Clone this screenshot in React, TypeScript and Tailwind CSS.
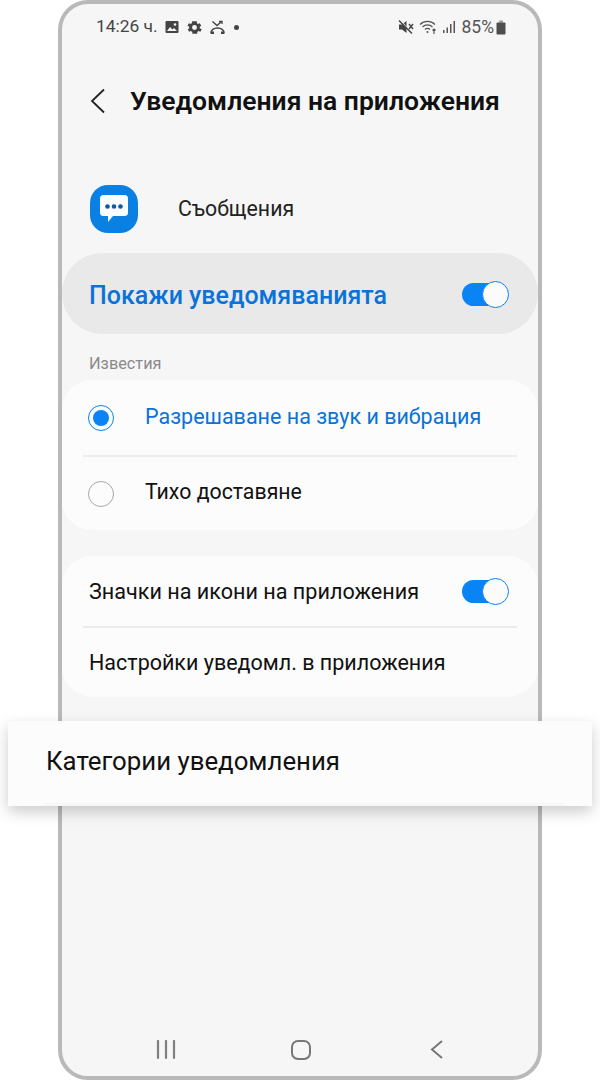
const font = { fontFamily: "Roboto, 'Noto Sans', sans-serif" };

function Toggle() {
  return (
    <div className="relative h-[26px] w-[47px] shrink-0">
      <div className="absolute left-0 top-[2px] h-[23px] w-[40px] rounded-full bg-[#0a84f5]" />
      <div className="absolute right-0 top-0 h-[27px] w-[27px] rounded-full border border-[#0a84f5] bg-[#fbfbfb]" />
    </div>
  );
}

function StatusIcons() {
  return (
    <div className="flex items-center text-[#444]">
      <svg width="14" height="14" viewBox="0 0 14 14">
        <rect x="0.500" y="1" width="13" height="12" rx="1" fill="#444" />
        <circle cx="10" cy="4.500" r="1.300" fill="#f6f6f6" />
        <path d="M2 11l3-4 2.500 2.500L9 8l3 3z" fill="#f6f6f6" />
      </svg>
      <svg width="17" height="17" viewBox="0 0 24 24" fill="#444" className="ml-[7px]">
        <path d="M19.400 13a7.500 7.500 0 0 0 0-2l2.100-1.600-2-3.500-2.500 1a7.600 7.600 0 0 0-1.700-1L15.300 3.200H8.700l-.4 2.700a7.600 7.600 0 0 0-1.700 1l-2.500-1-2 3.500L4.600 11a7.500 7.500 0 0 0 0 2l-2.100 1.600 2 3.500 2.500-1a7.600 7.600 0 0 0 1.700 1l.4 2.700h6.600l.4-2.700a7.600 7.600 0 0 0 1.700-1l2.500 1 2-3.500zM12 15.500a3.500 3.500 0 1 1 0-7 3.500 3.500 0 0 1 0 7z" />
      </svg>
      <svg width="15" height="15" viewBox="0 0 15 15" fill="none" stroke="#444" className="ml-[7px]">
        <path d="M1 13.500c0-3.500 2.800-5.500 6.500-5.500s6.500 2 6.500 5.500" strokeWidth="1.700" />
        <path d="M2.500 1.500l4.500 4 4.500-4" strokeWidth="1.500" />
        <path d="M9 1.500h3v2.500" strokeWidth="1.300" />
        <path d="M1 12.800h3M11 12.800h3" strokeWidth="2.400" />
      </svg>
      <div className="ml-[9px] h-[5px] w-[5px] rounded-full bg-[#444]" />
    </div>
  );
}

function StatusRight() {
  return (
    <div className="flex items-center text-[#444]">
      <svg width="16" height="16" viewBox="0 0 16 16" className="mr-[5px]">
        <path d="M1 5.500h3L8.500 2v12L4 10.500H1z" fill="#444" />
        <path d="M11 5l4 5M15 5l-4 5" stroke="#444" strokeWidth="1.400" />
        <path d="M2 1l12 14" stroke="#f6f6f6" strokeWidth="1.500" />
        <path d="M1 1.500l13 13" stroke="#444" strokeWidth="1.500" />
      </svg>
      <svg width="20" height="16" viewBox="0 0 20 16" fill="none" stroke="#555" strokeWidth="1.200">
        <path d="M1 5.500a10.500 10.500 0 0 1 15 0" />
        <path d="M3.500 8a7 7 0 0 1 10 0" />
        <path d="M6 10.500a3.500 3.500 0 0 1 5 0" />
        <circle cx="8.500" cy="13" r="1" fill="#555" stroke="none" />
        <path d="M15 15v-5M13.500 11.500l1.500-1.500 1.500 1.500" />
      </svg>
      <svg width="14" height="14" viewBox="0 0 14 14" fill="#555" className="ml-[3px] mr-[6px]">
        <rect x="1" y="10" width="1.500" height="3" />
        <rect x="4.500" y="7.500" width="1.500" height="5.500" />
        <rect x="8" y="4" width="1.500" height="9" />
        <rect x="11.500" y="1" width="1.500" height="12" />
      </svg>
      <span className="mt-[2px] text-[17.500px] leading-none text-[#555]">85%</span>
      <svg width="10" height="15" viewBox="0 0 10 15" className="ml-[2px]">
        <rect x="3" y="0.500" width="4" height="2" fill="#999" />
        <rect x="0.500" y="2.500" width="9" height="12" rx="1" fill="#4d4d4d" />
      </svg>
    </div>
  );
}

function MessagesIcon() {
  return (
    <div className="flex h-[48px] w-[48px] items-center justify-center rounded-[18px] bg-[#0b80e3]">
      <svg width="30" height="30" viewBox="0 0 30 30">
        <path d="M4.500 1h21A3.500 3.500 0 0 1 29 4.500v14a3.500 3.500 0 0 1-3.500 3.500H14l-5 6v-6H4.500A3.500 3.500 0 0 1 1 18.500v-14A3.500 3.500 0 0 1 4.500 1z" fill="#fbfdff" />
        <circle cx="8.500" cy="12.500" r="2.300" fill="#0c57a8" />
        <circle cx="15" cy="12.500" r="2.300" fill="#0c57a8" />
        <circle cx="21.500" cy="12.500" r="2.300" fill="#0c57a8" />
      </svg>
    </div>
  );
}

export default function App() {
  return (
    <div className="relative h-[1080px] w-[600px] overflow-hidden bg-white" style={font}>
      <div className="mx-auto flex h-[1080px] w-[484px] flex-col rounded-[30px] border-4 border-[#b9b9b9] bg-[#f6f6f6]">
        <div className="flex h-[40px] items-center justify-between pl-[34px] pr-[32px] pt-[6px]">
          <div className="flex items-center gap-[7px]">
            <span className="text-[17.400px] leading-none text-[#444]">14:26 ч.</span>
            <StatusIcons />
          </div>
          <StatusRight />
        </div>

        <div className="mt-[33px] flex h-[48px] items-center pl-[28px]">
          <svg width="16" height="26" viewBox="0 0 16 26" fill="none" stroke="#222" strokeWidth="1.800">
            <path d="M14 1.500L2 13l12 11.500" />
          </svg>
          <h1 className="ml-[24px] text-[26.500px] font-semibold leading-none text-[#111]">Уведомления на приложения</h1>
        </div>

        <div className="mt-[60px] flex items-center pl-[28px]">
          <MessagesIcon />
          <span className="ml-[40px] text-[21.300px] leading-none text-[#222]">Съобщения</span>
        </div>

        <div className="mt-[20px] flex h-[81px] items-center justify-between rounded-[40px] bg-[#e9e9e9] pl-[27px] pr-[29px]">
          <span className="mt-[4px] text-[25px] font-medium leading-none text-[#0a72d9]">Покажи уведомяванията</span>
          <Toggle />
        </div>

        <div className="mt-[21px] pl-[27px] text-[16.300px] leading-[18px] text-[#8a8a8a]">Известия</div>

        <div className="mt-[7px] h-[150px] rounded-[30px] bg-[#fcfcfc]">
          <div className="mx-[21px] flex h-[77px] items-center border-b-2 border-[#ececec] pl-[5px]">
            <div className="flex h-[26px] w-[26px] items-center justify-center rounded-full border-[1.500px] border-[#0a84f5]">
              <div className="h-[16px] w-[16px] rounded-full bg-[#0a84f5]" />
            </div>
            <span className="mb-[2px] ml-[31px] text-[21.500px] leading-none text-[#0a72d9]">Разрешаване на звук и вибрация</span>
          </div>
          <div className="mx-[21px] flex h-[73px] items-center pl-[5px]">
            <div className="h-[26px] w-[26px] rounded-full border-[1.500px] border-[#a8a8a8]" />
            <span className="mb-[3px] ml-[31px] text-[21.300px] leading-none text-[#111]">Тихо доставяне</span>
          </div>
        </div>

        <div className="mt-[26px] h-[141px] rounded-[30px] bg-[#fcfcfc]">
          <div className="mx-[21px] flex h-[72px] items-center justify-between border-b-2 border-[#ececec] pl-[6px] pr-[8px]">
            <span className="mt-[2px] text-[21.600px] leading-none text-[#111]">Значки на икони на приложения</span>
            <Toggle />
          </div>
          <div className="mx-[21px] flex h-[69px] items-center pl-[6px]">
            <span className="text-[21.500px] leading-none text-[#111]">Настройки уведомл. в приложения</span>
          </div>
        </div>

        <div className="mt-auto flex h-[60px] items-start justify-between pl-[94px] pr-[94px] pt-[24px]">
          <svg width="20" height="20" viewBox="0 0 20 20" stroke="#808080" strokeWidth="2.200" strokeLinecap="round">
            <path d="M2 1v17M10 1v17M18 1v17" />
          </svg>
          <svg width="20" height="20" viewBox="0 0 20 20" fill="none" stroke="#777" strokeWidth="2" className="mr-[4px]">
            <rect x="1" y="1" width="18" height="18" rx="6" />
          </svg>
          <svg width="14" height="20" viewBox="0 0 14 20" fill="none" stroke="#777" strokeWidth="2">
            <path d="M12 1L2 9.500l10 8.500" />
          </svg>
        </div>
      </div>

      <div className="absolute left-[8px] top-[721px] flex h-[85px] w-[584px] items-center bg-[#fcfcfc] pb-[4px] pl-[38px] shadow-[0_6px_14px_rgba(0,0,0,0.2)]">
        <span className="text-[25.800px] leading-none text-[#111]">Категории уведомления</span>
        <div className="absolute bottom-0 left-[36px] h-[3px] w-[520px] bg-[#f7f7f7]" />
      </div>
    </div>
  );
}
